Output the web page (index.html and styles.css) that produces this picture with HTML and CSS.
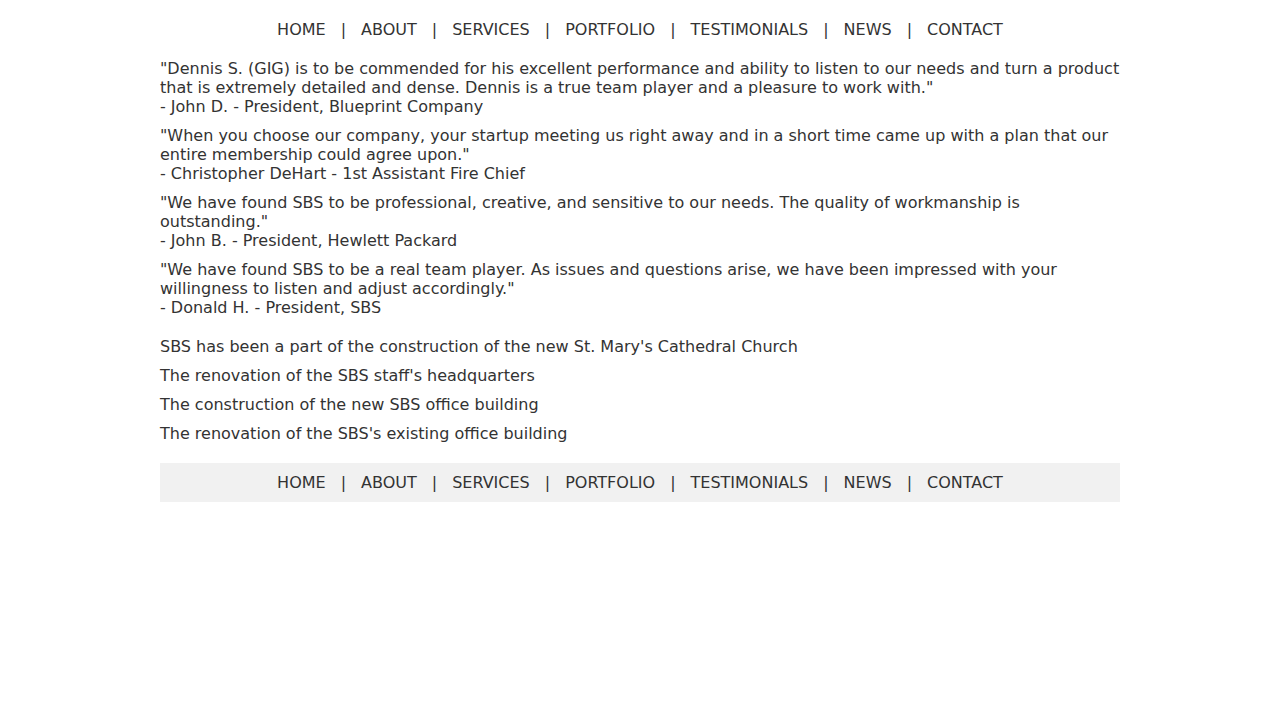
FILE: index.html
```html
<!DOCTYPE html>
<html>
<head>
<meta charset="utf-8">
<title>Testimonials</title>
<link rel="stylesheet" href="styles.css">
</head>
<body>
<div class="page">
  <nav class="nav">
    <a href="#">HOME</a><span class="sep">|</span><a href="#">ABOUT</a><span class="sep">|</span><a href="#">SERVICES</a><span class="sep">|</span><a href="#">PORTFOLIO</a><span class="sep">|</span><a href="#">TESTIMONIALS</a><span class="sep">|</span><a href="#">NEWS</a><span class="sep">|</span><a href="#">CONTACT</a>
  </nav>
  <section class="testimonials">
    <p>"Dennis S. (GIG) is to be commended for his excellent performance and ability to listen to our needs and turn a product that is extremely detailed and dense. Dennis is a true team player and a pleasure to work with."<br>- John D. - President, Blueprint Company</p>
    <p>"When you choose our company, your startup meeting us right away and in a short time came up with a plan that our entire membership could agree upon."<br>- Christopher DeHart - 1st Assistant Fire Chief</p>
    <p>"We have found SBS to be professional, creative, and sensitive to our needs. The quality of workmanship is outstanding."<br>- John B. - President, Hewlett Packard</p>
    <p>"We have found SBS to be a real team player. As issues and questions arise, we have been impressed with your willingness to listen and adjust accordingly."<br>- Donald H. - President, SBS</p>
  </section>
  <section class="projects">
    <p>SBS has been a part of the construction of the new St. Mary's Cathedral Church</p>
    <p>The renovation of the SBS staff's headquarters</p>
    <p>The construction of the new SBS office building</p>
    <p>The renovation of the SBS's existing office building</p>
  </section>
  <nav class="nav footer">
    <a href="#">HOME</a><span class="sep">|</span><a href="#">ABOUT</a><span class="sep">|</span><a href="#">SERVICES</a><span class="sep">|</span><a href="#">PORTFOLIO</a><span class="sep">|</span><a href="#">TESTIMONIALS</a><span class="sep">|</span><a href="#">NEWS</a><span class="sep">|</span><a href="#">CONTACT</a>
  </nav>
</div>
</body>
</html>
```
FILE: styles.css
```css
html, body {
  margin: 0;
  padding: 0;
  background: #fff;
}
body {
  font-family: "DejaVu Sans", sans-serif;
  font-size: 16px;
  line-height: 19px;
  color: #333;
}
.page {
  width: 960px;
  margin: 0 auto;
}
.nav {
  text-align: center;
  padding: 20px 0 10px;
}
.nav a {
  color: #333;
  text-decoration: none;
}
.sep {
  display: inline-block;
  margin: 0 15px;
}
.testimonials p,
.projects p {
  margin: 0 0 10px;
}
.testimonials {
  padding-top: 10px;
}
.projects {
  padding-top: 10px;
}
.footer {
  background: #f1f1f1;
  padding: 10px 0;
  margin-top: 20px;
}
```
